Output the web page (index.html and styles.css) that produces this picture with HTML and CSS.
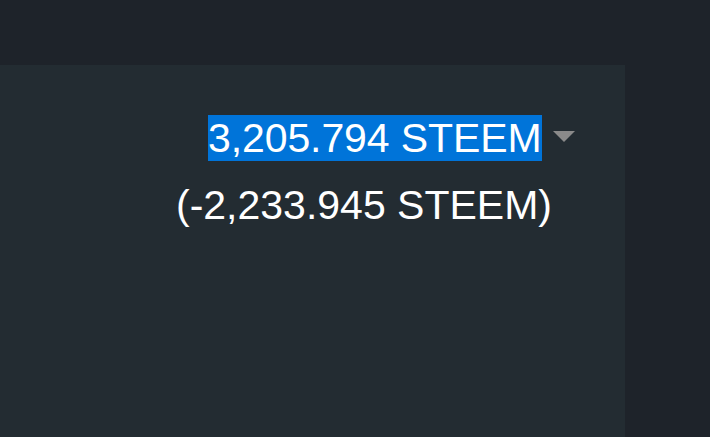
FILE: index.html
```html
<!DOCTYPE html>
<html>
<head>
<meta charset="utf-8">
<link rel="stylesheet" href="styles.css">
</head>
<body>
<div class="header"></div>
<div class="main">
  <div class="panel">
    <div class="balance">
      <div class="line1"><span class="amount">3,205.794 STEEM</span><span class="caret"></span></div>
      <div class="line2">(-2,233.945 STEEM)</div>
    </div>
  </div>
  <div class="side"></div>
</div>
</body>
</html>
```
FILE: styles.css
```css
html, body {
  margin: 0;
  padding: 0;
  background: #1e232a;
  height: 100%;
  overflow: hidden;
}
body {
  font-family: "Liberation Sans", Arial, sans-serif;
  color: #ffffff;
}
.header {
  height: 65px;
}
.main {
  display: flex;
  height: 372px;
}
.panel {
  width: 625px;
  background: #232c32;
}
.side {
  flex: 1;
}
.balance {
  padding-top: 50px;
  padding-left: 208px;
}
.line1 {
  display: flex;
  align-items: center;
  font-size: 41px;
  line-height: 46px;
}
.amount {
  background: #0074d9;
  padding-right: 0;
  letter-spacing: -0.1px;
}
.caret {
  width: 0;
  height: 0;
  border-left: 11px solid transparent;
  border-right: 11px solid transparent;
  border-top: 11px solid #8a8a8a;
  margin-left: 11px;
  margin-top: -4px;
}
.line2 {
  font-size: 41px;
  line-height: 46px;
  margin-top: 21px;
  margin-left: -32px;
}
```
